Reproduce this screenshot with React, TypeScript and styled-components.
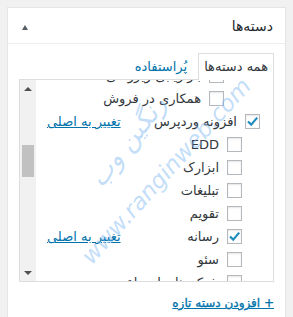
import React, { useLayoutEffect, useRef } from 'react';
import styled, { createGlobalStyle } from 'styled-components';

const GlobalStyle = createGlobalStyle`
  html, body {
    margin: 0;
    background: #f1f1f1;
    font-family: "DejaVu Sans", "Noto Sans", sans-serif;
  }
`;

type Category = { name: string; level: number; checked?: boolean; primary?: boolean };

const categories: Category[] = [
  { name: 'آموزش', level: 0 },
  { name: 'اخبار', level: 0 },
  { name: 'بازاریابی', level: 0 },
  { name: 'بازاریابی آنلاین', level: 1 },
  { name: 'بازاریابی ویروسی', level: 2 },
  { name: 'همکاری در فروش', level: 2 },
  { name: 'افزونه وردپرس', level: 0, checked: true, primary: true },
  { name: 'EDD', level: 1 },
  { name: 'ابزارک', level: 1 },
  { name: 'تبلیغات', level: 1 },
  { name: 'تقویم', level: 1 },
  { name: 'رسانه', level: 1, checked: true, primary: true },
  { name: 'سئو', level: 1 },
  { name: 'شبکه های اجتماعی', level: 1 },
  { name: 'فروشگاه', level: 1 },
  { name: 'قالب وردپرس', level: 0 },
];

const SCROLL = 108;

const Page = styled.div`
  padding: 7px 0 0 7px;
`;

const Postbox = styled.div`
  position: relative;
  width: 279px;
  height: 310px;
  box-sizing: border-box;
  background: #fff;
  border: 1px solid #e5e5e5;
  border-bottom: none;
  box-shadow: 0 1px 1px rgba(0, 0, 0, 0.04);
  direction: rtl;
  overflow: hidden;
`;

const Header = styled.div`
  display: flex;
  align-items: center;
  justify-content: space-between;
  height: 35px;
  padding: 0 12px 0 14px;
  border-bottom: 1px solid #eee;
`;

const Title = styled.h2`
  margin: 0;
  font-size: 14px;
  font-weight: 400;
  color: #23282d;
`;

const Toggle = styled.span`
  width: 0;
  height: 0;
  border-left: 3.5px solid transparent;
  border-right: 3.5px solid transparent;
  border-bottom: 5px solid #555d66;
  margin-top: 3px;
`;

const Inside = styled.div`
  padding: 9px 11px 0;
`;

const Tabs = styled.ul`
  display: flex;
  margin: 0;
  padding: 0;
  list-style: none;
  font-size: 13px;
`;

const Tab = styled.li<{ $active?: boolean }>`
  position: relative;
  z-index: 1;
  height: 27px;
  box-sizing: border-box;
  margin-bottom: -1px;
  padding: 0 ${(p) => (p.$active ? '5px' : '10px')};
  line-height: 25px;
  white-space: nowrap;
  border: 1px solid ${(p) => (p.$active ? '#ddd' : 'transparent')};
  border-bottom: none;
  background: ${(p) => (p.$active ? '#fff' : 'transparent')};
  color: ${(p) => (p.$active ? '#32373c' : '#0073aa')};
`;

const Panel = styled.div`
  display: flex;
  height: 203px;
  box-sizing: border-box;
  border: 1px solid #ddd;
  background: #fff;
`;

const Viewport = styled.div`
  flex: 1;
  overflow: hidden;
`;

const Checklist = styled.ul`
  margin: 0;
  padding: 0;
  list-style: none;
`;

const Row = styled.li<{ $level: number }>`
  display: flex;
  align-items: center;
  height: 23px;
  padding-right: ${(p) => 13 + p.$level * 18}px;
  padding-left: 11px;
  font-size: 13px;
  color: #32373c;
`;

const Box = styled.span`
  display: flex;
  align-items: center;
  justify-content: center;
  width: 15px;
  height: 15px;
  box-sizing: border-box;
  flex-shrink: 0;
  border: 1px solid #b4b9be;
  box-shadow: inset 0 1px 2px rgba(0, 0, 0, 0.1);
  background: #fff;
`;

const Label = styled.span`
  margin-right: 8px;
  white-space: nowrap;
`;

const PrimaryLink = styled.a`
  margin-right: auto;
  color: #0073aa;
  text-decoration: underline;
  white-space: nowrap;
`;

const Scrollbar = styled.div`
  display: flex;
  flex-direction: column;
  width: 16px;
  background: #f1f1f1;
`;

const Arrow = styled.span<{ $down?: boolean }>`
  display: flex;
  align-items: center;
  justify-content: center;
  height: 17px;
  &::before {
    content: '';
    width: 0;
    height: 0;
    border-left: 4px solid transparent;
    border-right: 4px solid transparent;
    ${(p) => (p.$down ? 'border-top: 4px solid #505050;' : 'border-bottom: 4px solid #505050;')}
  }
`;

const Track = styled.div`
  flex: 1;
  padding: 48px 2px 0;
`;

const Thumb = styled.div`
  height: 32px;
  background: #c1c1c1;
`;

const AddNew = styled.a`
  display: inline-block;
  margin-top: 11px;
  line-height: 20px;
  font-size: 12px;
  font-weight: 400;
  color: #0073aa;
  text-decoration: underline;
  -webkit-text-stroke: 0.35px #0073aa;
`;

const Watermark = styled.div<{ $size: number }>`
  position: absolute;
  pointer-events: none;
  white-space: nowrap;
  font-family: "DejaVu Sans", sans-serif;
  font-size: ${(p) => p.$size}px;
  font-style: italic;
  color: rgba(120, 180, 240, 0.45);
  transform-origin: center;
`;

const Check = () => (
  <svg width="13" height="13" viewBox="0 0 13 13">
    <path d="M2 6.5 L5.2 9.6 L11.2 2.6" fill="none" stroke="#1e8cbe" strokeWidth="2.2" />
  </svg>
);

export default function App() {
  const viewRef = useRef<HTMLDivElement>(null);

  useLayoutEffect(() => {
    if (viewRef.current) viewRef.current.scrollTop = SCROLL;
  }, []);

  return (
    <>
      <GlobalStyle />
      <Page>
        <Postbox>
          <Header>
            <Title>دسته‌ها</Title>
            <Toggle />
          </Header>
          <Inside>
            <Tabs>
              <Tab $active>همه دسته‌ها</Tab>
              <Tab>پُراستفاده</Tab>
            </Tabs>
            <Panel>
              <Viewport ref={viewRef}>
                <Checklist>
                  {categories.map((c) => (
                    <Row key={c.name} $level={c.level}>
                      <Box>{c.checked && <Check />}</Box>
                      <Label>{c.name}</Label>
                      {c.primary && <PrimaryLink>تغییر به اصلی</PrimaryLink>}
                    </Row>
                  ))}
                </Checklist>
              </Viewport>
              <Scrollbar>
                <Arrow />
                <Track>
                  <Thumb />
                </Track>
                <Arrow $down />
              </Scrollbar>
            </Panel>
            <AddNew>+ افزودن دسته تازه</AddNew>
          </Inside>
          <Watermark $size={23} style={{ left: 38, top: 150, transform: 'rotate(-48deg)' }}>
            www.ranginweb.com
          </Watermark>
          <Watermark $size={26} style={{ left: 66, top: 118, transform: 'rotate(-52deg)' }}>
            رنگین وب
          </Watermark>
        </Postbox>
      </Page>
    </>
  );
}
